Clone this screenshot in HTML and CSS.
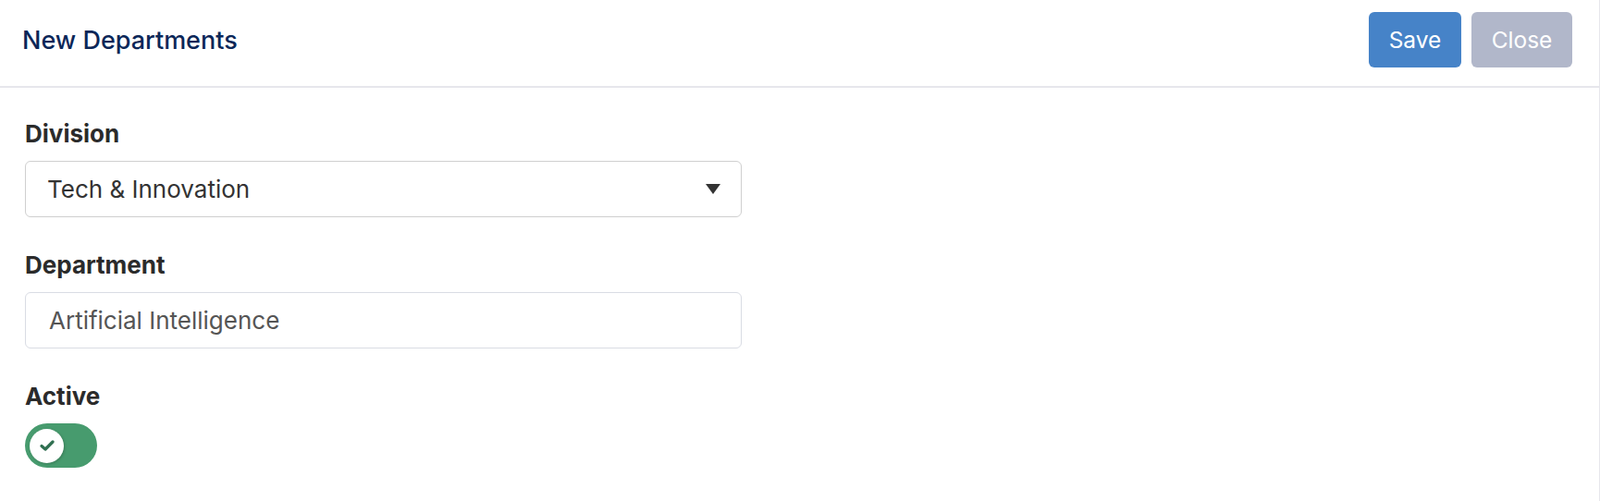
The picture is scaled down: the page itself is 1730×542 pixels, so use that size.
FILE: index.html
```html
<!DOCTYPE html>
<html lang="en">
<head>
    <meta charset="UTF-8">
    <meta name="viewport" content="width=device-width, initial-scale=1.0">
    <title>New Departments</title>
    <link rel="stylesheet" href="styles.css">
</head>
<body>
    <div class="page">
        <!-- Header -->
        <div class="header">
            <h1 class="title">New Departments</h1>
            <div class="actions">
                <button type="button" class="btn btn-save">Save</button>
                <button type="button" class="btn btn-close">Close</button>
            </div>
        </div>

        <!-- Form -->
        <form class="form">
            <div class="form-group">
                <label class="label" for="division">Division</label>
                <div class="select" id="division">
                    <span class="select-value">Tech &amp; Innovation</span>
                    <svg class="select-arrow" width="16" height="11" viewBox="0 0 16 11">
                        <path d="M0 0 H16 L8 11 Z" fill="#333"/>
                    </svg>
                </div>
            </div>
            <div class="form-group">
                <label class="label" for="department">Department</label>
                <input class="input" type="text" id="department" value="Artificial Intelligence">
            </div>
            <div class="form-group">
                <label class="label">Active</label>
                <div class="toggle">
                    <span class="knob">
                        <svg width="16" height="12" viewBox="0 0 16 12">
                            <path d="M2 6.5 L6 10 L14 2" fill="none" stroke="#2f6f50" stroke-width="3.2" stroke-linecap="round" stroke-linejoin="round"/>
                        </svg>
                    </span>
                </div>
            </div>
        </form>
    </div>
</body>
</html>
```

FILE: styles.css
```css
/* General Styling */
body {
    margin: 0;
    font-family: 'Inter', 'Noto Sans', sans-serif;
    background: #fff;
    color: #333;
}
.page {
    min-height: 100vh;
    border-right: 1px solid #e6e6ec;
    box-sizing: border-box;
}
.header {
    display: flex;
    justify-content: space-between;
    align-items: center;
    padding: 13px 29px 20px 24px;
    border-bottom: 2px solid #e6e6ec;
}
.title {
    margin: 0;
    font-size: 27px;
    font-weight: 500;
    color: #0c2758;
}
.actions {
    display: flex;
    gap: 11px;
}
.btn {
    height: 60px;
    border: none;
    border-radius: 6px;
    color: #fff;
    font-family: inherit;
    font-size: 24.5px;
    cursor: pointer;
}
.btn-save {
    width: 100px;
    background: #4683c8;
}
.btn-close {
    width: 109px;
    background: #b1b7ca;
}
.form {
    padding: 36px 0 0 27px;
}
.form-group {
    margin-bottom: 38px;
}
.label {
    display: block;
    font-size: 26px;
    font-weight: 700;
    line-height: 27px;
    margin-bottom: 16px;
    color: #2b2b2b;
}
.select, .input {
    box-sizing: border-box;
    width: 775px;
    height: 61px;
    border-radius: 6px;
    font-family: inherit;
    font-size: 26px;
}
.select {
    display: flex;
    align-items: center;
    justify-content: space-between;
    padding: 0 22px 0 23px;
    border: 1px solid #cfcfcf;
    color: #333;
}
.input {
    display: block;
    padding: 0 25px;
    border: 1px solid #d9dce4;
    color: #555;
    outline: none;
}
.toggle {
    width: 78px;
    height: 48px;
    border-radius: 24px;
    background: #479b6e;
    display: flex;
    align-items: center;
    padding-left: 5px;
    box-sizing: border-box;
}
.knob {
    width: 37px;
    height: 37px;
    border-radius: 50%;
    background: #fff;
    box-shadow: 1px 1px 3px rgba(0, 0, 0, 0.2);
    display: flex;
    align-items: center;
    justify-content: center;
}
```
